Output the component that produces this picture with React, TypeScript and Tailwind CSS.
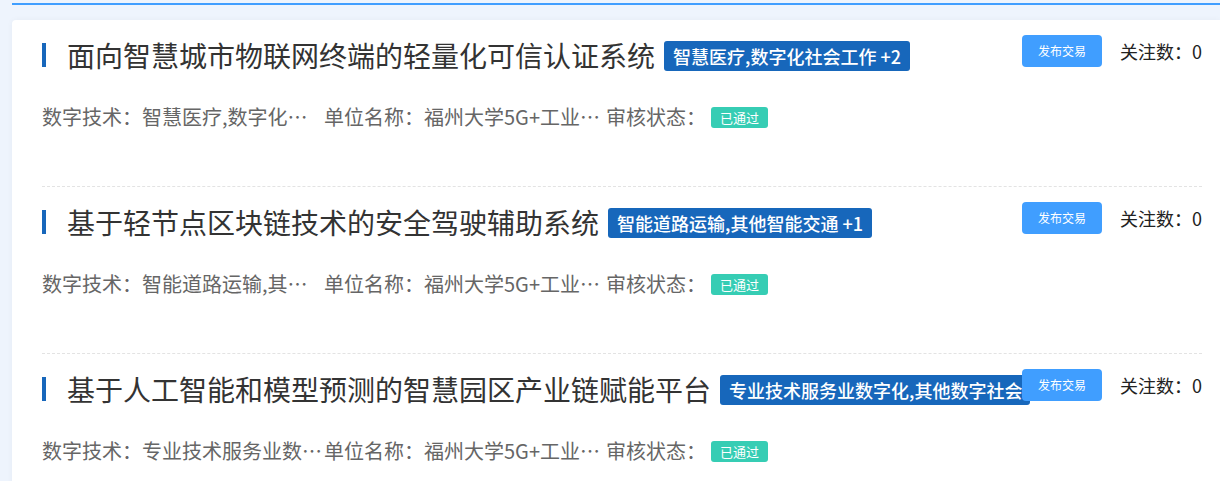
import React from "react";

type Item = {
  title: string;
  tag: string;
  tech: string;
  unit: string;
};

const items: Item[] = [
  {
    title: "面向智慧城市物联网终端的轻量化可信认证系统",
    tag: "智慧医疗,数字化社会工作 +2",
    tech: "智慧医疗,数字化社会工作,智慧城市",
    unit: "福州大学5G+工业互联网研究院",
  },
  {
    title: "基于轻节点区块链技术的安全驾驶辅助系统",
    tag: "智能道路运输,其他智能交通 +1",
    tech: "智能道路运输,其他智能交通,车联网",
    unit: "福州大学5G+工业互联网研究院",
  },
  {
    title: "基于人工智能和模型预测的智慧园区产业链赋能平台",
    tag: "专业技术服务业数字化,其他数字社会工作 +2",
    tech: "专业技术服务业数字化,其他数字社会工作",
    unit: "福州大学5G+工业互联网研究院",
  },
];

function Row({ item }: { item: Item }) {
  return (
    <div className="relative pt-5 pb-[55px] border-b border-dashed border-[#e3e3e3]">
      <div className="flex items-center h-[30px]">
        <span className="w-1 h-6 bg-[#1767bb] shrink-0" />
        <span className="ml-[21px] text-[28px] leading-[30px] text-[#333] whitespace-nowrap">
          {item.title}
        </span>
        <span className="ml-[9px] mt-[1px] h-[30px] leading-[30px] px-[9px] max-w-[310px] overflow-hidden whitespace-nowrap rounded-[3px] bg-[#1767bb] text-white text-[18px] font-medium shrink-0">
          {item.tag}
        </span>
      </div>
      <div className="absolute right-0 top-[15px] z-10 flex items-center">
        <button className="w-20 h-8 rounded-[4px] bg-[#409eff] text-white text-[12px] leading-8">
          发布交易
        </button>
        <span className="ml-[18px] text-[18px] text-[#222] leading-8">关注数：0</span>
      </div>
      <div className="mt-[33px] h-7 flex items-center text-[20px] text-[#666] whitespace-nowrap">
        <span>数字技术：</span>
        <span className="inline-block max-w-[180px] overflow-hidden text-ellipsis whitespace-nowrap">
          {item.tech}
        </span>
        <span className="ml-[2px]">单位名称：</span>
        <span className="inline-block max-w-[180px] overflow-hidden text-ellipsis whitespace-nowrap">
          {item.unit}
        </span>
        <span className="ml-[2px]">审核状态：</span>
        <span className="ml-[5px] h-[21px] leading-[21px] px-[9px] rounded-[3px] bg-[#36cdb4] text-white text-[13px]">
          已通过
        </span>
      </div>
    </div>
  );
}

export default function App() {
  return (
    <div
      className="min-h-screen bg-[#eef4fd] pl-3 pt-[3px] overflow-hidden"
      style={{ fontFamily: '"Noto Sans CJK SC", "Noto Sans", sans-serif' }}
    >
      <div className="h-[2px] bg-[#409eff]" />
      <div className="mt-[15px] bg-white rounded-l-[4px] shadow-[0_0_6px_rgba(0,0,0,0.04)] pl-[30px] pr-[18px] min-h-[470px]">
        {items.map((it, i) => (
          <Row key={i} item={it} />
        ))}
      </div>
    </div>
  );
}
